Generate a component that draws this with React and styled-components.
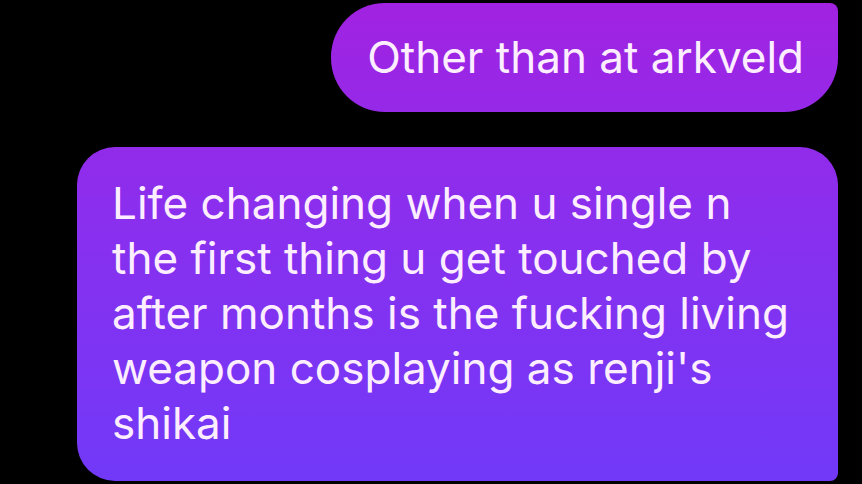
import React from 'react';
import styled, {createGlobalStyle} from 'styled-components';

const GlobalStyle = createGlobalStyle`
    html, body {
        margin: 0;
        padding: 0;
        background: #000;
    }
`;

const Thread = styled.main`
    width: 862px;
    height: 484px;
    box-sizing: border-box;
    padding: 3px 24px 0 0;
    background: #000;
    overflow: hidden;

    display: flex;
    flex-direction: column;
    align-items: flex-end;
    gap: 35px;
`;

// the gradient is pinned to the viewport, so every bubble shows its slice
const Bubble = styled.div`
    box-sizing: border-box;
    width: ${props => props.wide ? '761px' : 'auto'};
    padding: ${props => props.wide ? '29px 48px 30px 35px' : '27px 34px 27px 36px'};
    border-radius: ${props => props.wide ? '38px 38px 8px 38px' : '54px 8px 54px 54px'};
    background: linear-gradient(180deg, #a222e1 0%, #8a2fee 45%, #7139f8 100%);
    background-attachment: fixed;

    color: #fdeeff;
    font-family: Inter, "Noto Sans", sans-serif;
    font-size: 44px;
    line-height: 55px;
`;

class App extends React.Component {
    render() {
        return (
            <>
                <GlobalStyle/>
                <Thread>
                    <Bubble>Other than at arkveld</Bubble>
                    <Bubble wide>
                        Life changing when u single n the first thing u get touched by after months is the fucking living weapon cosplaying as renji's shikai
                    </Bubble>
                </Thread>
            </>
        );
    }
}

export default App;
